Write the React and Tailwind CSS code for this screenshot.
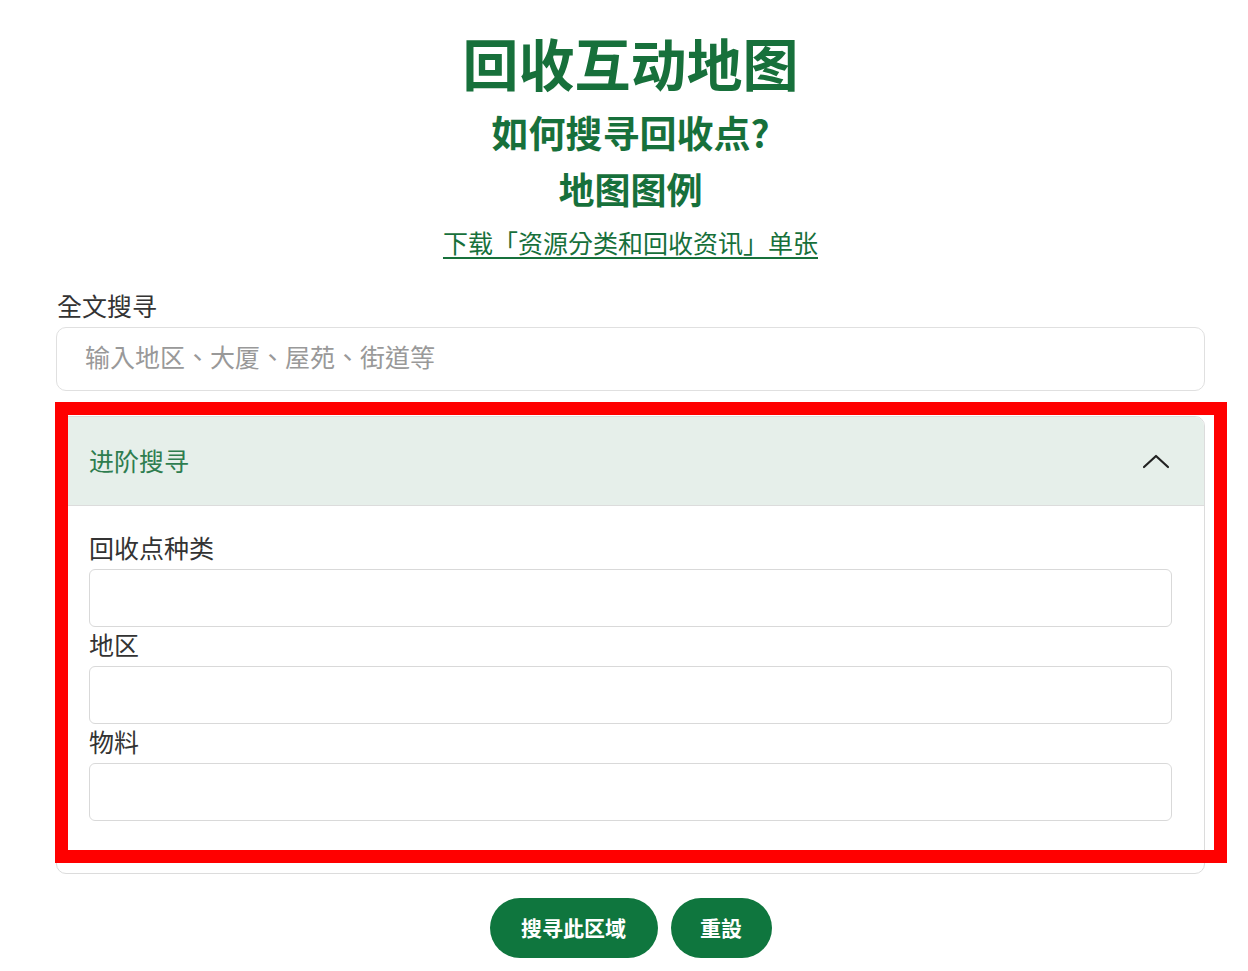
import React from "react";

const font = { fontFamily: '"Noto Sans CJK TC", "Noto Sans CJK SC", "Noto Sans", sans-serif' };

function Field({ label }) {
  return (
    <div className="flex flex-col">
      <label className="text-[25px] leading-[30px] text-[#333] mb-[7px]">{label}</label>
      <input className="h-[58px] w-full rounded-[6px] border border-[#d9d9d9] bg-white px-3 outline-none" />
    </div>
  );
}

export default function App() {
  return (
    <div className="min-h-[971px] bg-white" style={font}>
      <div className="ml-[56px] w-[1149px] pt-[26px] pb-[14px]">
        <h1 className="text-center text-[56px] leading-[72px] font-bold text-[#17703b]">回收互动地图</h1>
        <h2 className="mt-[10px] text-center text-[37px] leading-[48px] font-bold text-[#17703b]">如何搜寻回收点?</h2>
        <h2 className="mt-[8px] text-center text-[36px] leading-[48px] font-bold text-[#17703b]">地图图例</h2>
        <div className="mt-[12px] text-center">
          <a href="#" className="text-[25px] leading-[36px] text-[#17703b] underline underline-offset-[4px]">
            下载「资源分类和回收资讯」单张
          </a>
        </div>

        <div className="mt-[29px] flex flex-col">
          <label className="text-[25px] leading-[32px] text-[#333] ml-[1px]">全文搜寻</label>
          <input
            placeholder="输入地区、大厦、屋苑、街道等"
            className="mt-[6px] h-[64px] w-full rounded-[10px] border border-[#e0e0e0] bg-white px-[28px] pb-[6px] text-[25px] text-[#333] placeholder:text-[#999] outline-none"
          />
        </div>

        <div className="relative mt-[25px]">
          <div className="overflow-hidden rounded-[10px] border border-[#dcdcdc] bg-white">
            <div className="flex h-[89px] items-center justify-between border-b border-[#dcdcdc] bg-[#e6efea] pl-[32px] pr-[34px]">
              <span className="text-[25px] text-[#2e7d4f]">进阶搜寻</span>
              <svg width="28" height="16" viewBox="0 0 28 16" fill="none" stroke="#222" strokeWidth="2.2" strokeLinecap="round" strokeLinejoin="round">
                <path d="M2 14 L14 3 L26 14" />
              </svg>
            </div>
            <div className="flex flex-col px-[32px] pt-[26px] pb-[52px]">
              <Field label="回收点种类" />
              <div className="mt-[2px]"><Field label="地区" /></div>
              <div className="mt-[2px]"><Field label="物料" /></div>
            </div>
          </div>
          {/* highlight frame over the advanced-search panel */}
          <div className="pointer-events-none absolute left-[-1px] top-[-14px] h-[461px] w-[1172px] border-[13px] border-[#ff0000]" />
        </div>

        <div className="mt-[24px] flex justify-center gap-[13px]">
          <button className="h-[60px] w-[168px] rounded-full bg-[#0f763e] text-[21px] font-bold text-white">搜寻此区域</button>
          <button className="h-[60px] w-[101px] rounded-full bg-[#0f763e] text-[21px] font-bold text-white">重設</button>
        </div>
      </div>
    </div>
  );
}
